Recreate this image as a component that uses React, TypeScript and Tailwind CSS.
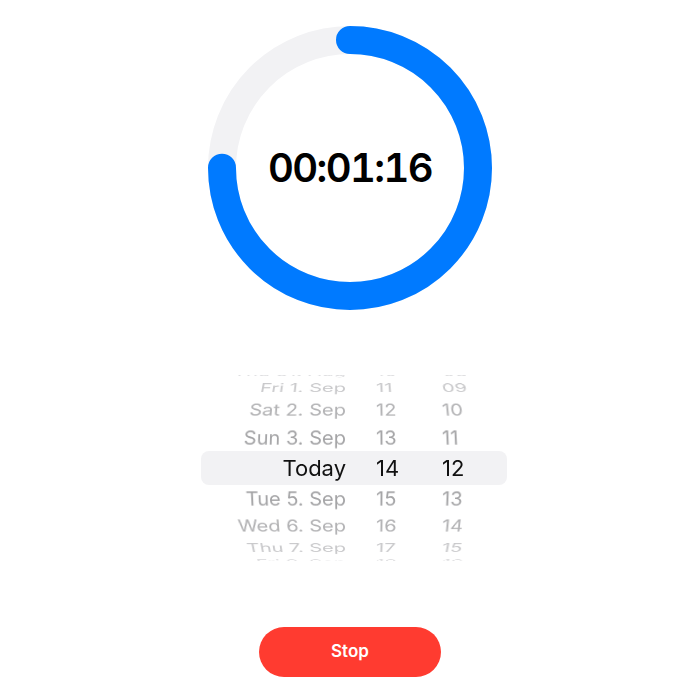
import React from 'react';

// Picker rows, k = offset from the selected row
const rows = [
  { k: -4, date: 'Thu 31. Aug', hour: '10', minute: '08' },
  { k: -3, date: 'Fri 1. Sep', hour: '11', minute: '09' },
  { k: -2, date: 'Sat 2. Sep', hour: '12', minute: '10' },
  { k: -1, date: 'Sun 3. Sep', hour: '13', minute: '11' },
  { k: 0, date: 'Today', hour: '14', minute: '12' },
  { k: 1, date: 'Tue 5. Sep', hour: '15', minute: '13' },
  { k: 2, date: 'Wed 6. Sep', hour: '16', minute: '14' },
  { k: 3, date: 'Thu 7. Sep', hour: '17', minute: '15' },
  { k: 4, date: 'Fri 8. Sep', hour: '18', minute: '16' },
];

const RADIUS = 100;
const STEP = 18;
const rad = (d: number) => (d * Math.PI) / 180;

const fade: Record<number, string> = {
  0: 'text-[#111111] text-[22px]',
  1: 'text-[#a4a4a6] text-[20px]',
  2: 'text-[#b2b2b4] text-[20px]',
  3: 'text-[#c9c9cb] text-[20px]',
  4: 'text-[#dedee0] text-[20px]',
};

function Ring() {
  const r = 128;
  const c = 2 * Math.PI * r;
  return (
    <div className="grid place-items-center">
      <svg width="284" height="284" viewBox="0 0 284 284" className="col-start-1 row-start-1">
        <circle cx="142" cy="142" r={r} fill="none" stroke="#f2f2f4" strokeWidth="28" />
        <circle
          cx="142"
          cy="142"
          r={r}
          fill="none"
          stroke="#007aff"
          strokeWidth="28"
          strokeLinecap="round"
          strokeDasharray={`${c * 0.75} ${c}`}
          transform="rotate(-90 142 142)"
        />
      </svg>
      <span className="col-start-1 row-start-1 text-[40px] font-semibold text-black tabular-nums tracking-[-0.04em] font-['Inter',sans-serif]">
        00:01:16
      </span>
    </div>
  );
}

function Picker() {
  return (
    <div className="grid h-[186px] w-[306px] ml-[8px] overflow-hidden font-['Inter',sans-serif]">
      <div className="col-start-1 row-start-1 self-start mt-[76px] h-[34px] w-[306px] rounded-[8px] bg-[#f2f2f4]" />
      <div className="col-start-1 row-start-1 self-start mt-[-5.8px] flex flex-col">
        {rows.map((row) => {
          const a = Math.abs(row.k);
          const height =
            a === 0
              ? RADIUS * 2 * Math.sin(rad(STEP / 2))
              : RADIUS * (Math.sin(rad((a + 0.5) * STEP)) - Math.sin(rad((a - 0.5) * STEP)));
          return (
            <div key={row.k} className="flex items-center" style={{ height }}>
              <div
                className={`flex h-[31.4px] w-[306px] shrink-0 items-center leading-none ${fade[a]}`}
                style={{ transform: `perspective(680px) rotateX(${-row.k * STEP}deg)` }}
              >
                <span className="w-[145px] text-right">{row.date}</span>
                <span className="ml-[30px] w-[66px]">{row.hour}</span>
                <span>{row.minute}</span>
              </div>
            </div>
          );
        })}
      </div>
    </div>
  );
}

export default function App() {
  return (
    <div className="flex h-[700px] w-[700px] flex-col items-center bg-white pt-[26px]">
      <Ring />
      <div className="mt-[65px]">
        <Picker />
      </div>
      <button className="mt-[66px] h-[50px] w-[182px] rounded-full bg-[#ff3b30] text-[17px] font-semibold text-white font-['Inter',sans-serif]">
        Stop
      </button>
    </div>
  );
}
